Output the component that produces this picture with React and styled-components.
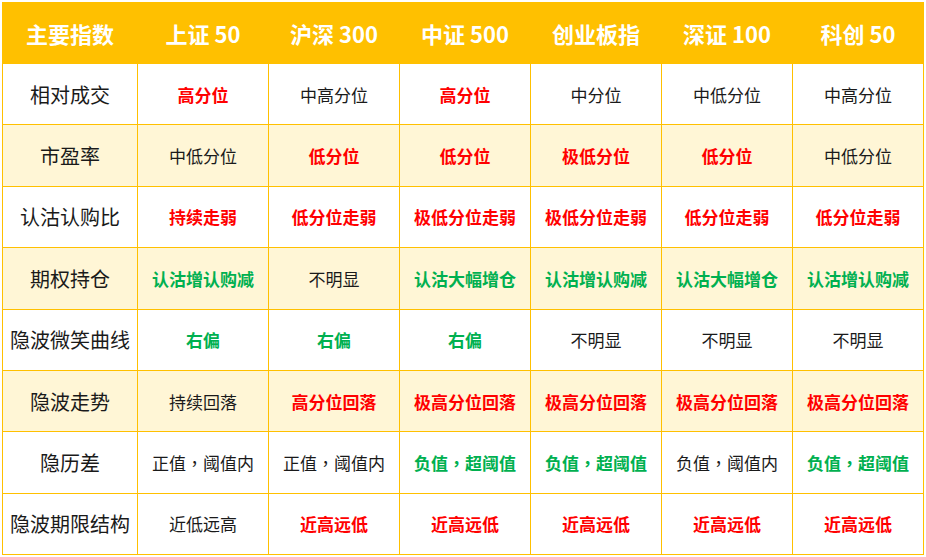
import React from "react";
import styled, { createGlobalStyle } from "styled-components";

const columns = ["上证 50", "沪深 300", "中证 500", "创业板指", "深证 100", "科创 50"];

// tone: n = plain, r = red bold, g = green bold
const rows = [
  ["相对成交", false, [["高分位", "r"], ["中高分位", "n"], ["高分位", "r"], ["中分位", "n"], ["中低分位", "n"], ["中高分位", "n"]]],
  ["市盈率", true, [["中低分位", "n"], ["低分位", "r"], ["低分位", "r"], ["极低分位", "r"], ["低分位", "r"], ["中低分位", "n"]]],
  ["认沽认购比", false, [["持续走弱", "r"], ["低分位走弱", "r"], ["极低分位走弱", "r"], ["极低分位走弱", "r"], ["低分位走弱", "r"], ["低分位走弱", "r"]]],
  ["期权持仓", true, [["认沽增认购减", "g"], ["不明显", "n"], ["认沽大幅增仓", "g"], ["认沽增认购减", "g"], ["认沽大幅增仓", "g"], ["认沽增认购减", "g"]]],
  ["隐波微笑曲线", false, [["右偏", "g"], ["右偏", "g"], ["右偏", "g"], ["不明显", "n"], ["不明显", "n"], ["不明显", "n"]]],
  ["隐波走势", true, [["持续回落", "n"], ["高分位回落", "r"], ["极高分位回落", "r"], ["极高分位回落", "r"], ["极高分位回落", "r"], ["极高分位回落", "r"]]],
  ["隐历差", false, [["正值，阈值内", "n"], ["正值，阈值内", "n"], ["负值，超阈值", "g"], ["负值，超阈值", "g"], ["负值，阈值内", "n"], ["负值，超阈值", "g"]]],
  ["隐波期限结构", false, [["近低远高", "n"], ["近高远低", "r"], ["近高远低", "r"], ["近高远低", "r"], ["近高远低", "r"], ["近高远低", "r"]]],
];

const tones = {
  n: { color: "#1a1a1a", weight: 400 },
  r: { color: "#ff0000", weight: 700 },
  g: { color: "#00b050", weight: 700 },
};

// full-width comma drawn centred, like the original font does
const renderText = (text) => {
  const parts = text.split("，");
  if (parts.length === 1) return text;
  return (
    <>
      {parts[0]}
      <Comma>，</Comma>
      {parts[1]}
    </>
  );
};

const App = () => {
  return (
    <>
      <GlobalStyle />
      <Table>
        <colgroup>
          <col style={{ width: 135 }} />
          {columns.map((c) => (
            <col key={c} style={{ width: 131 }} />
          ))}
        </colgroup>
        <thead>
          <tr>
            <HeadCell>主要指数</HeadCell>
            {columns.map((c) => (
              <HeadCell key={c}>{c}</HeadCell>
            ))}
          </tr>
        </thead>
        <tbody>
          {rows.map(([label, striped, cells]) => (
            <Row key={label} $striped={striped}>
              <RowHead>{label}</RowHead>
              {cells.map(([text, tone], j) => (
                <Cell key={j} $tone={tone}>
                  {renderText(text)}
                </Cell>
              ))}
            </Row>
          ))}
        </tbody>
      </Table>
    </>
  );
};
export default App;

const GlobalStyle = createGlobalStyle`
  body {
    margin: 0;
    background: #ffffff;
    font-family: "Noto Sans CJK SC", "Noto Sans", sans-serif;
  }
`;

const Table = styled.table`
  margin: 2px 0 0 2px;
  width: 921px;
  table-layout: fixed;
  border-collapse: collapse;
  border: 1px solid #ffc000;
`;

const HeadCell = styled.th`
  height: 60px;
  padding: 0;
  background: #ffc000;
  color: #ffffff;
  font-size: 22px;
  font-weight: 700;
  text-align: center;
  vertical-align: middle;
  border: 1px solid #ffc000;
  white-space: nowrap;
`;

const Row = styled.tr`
  height: 61.4px;
  background: ${(p) => (p.$striped ? "#fff6d6" : "#ffffff")};
`;

const RowHead = styled.td`
  padding: 0;
  text-align: center;
  font-size: 20px;
  color: #1a1a1a;
  border: 1px solid #ffc000;
  white-space: nowrap;
`;

const Cell = styled.td`
  padding: 0;
  text-align: center;
  font-size: 17px;
  color: ${(p) => tones[p.$tone].color};
  font-weight: ${(p) => tones[p.$tone].weight};
  border: 1px solid #ffc000;
  white-space: nowrap;
`;

const Comma = styled.span`
  font-family: "Noto Sans CJK TC", "Noto Sans CJK SC", sans-serif;
`;
